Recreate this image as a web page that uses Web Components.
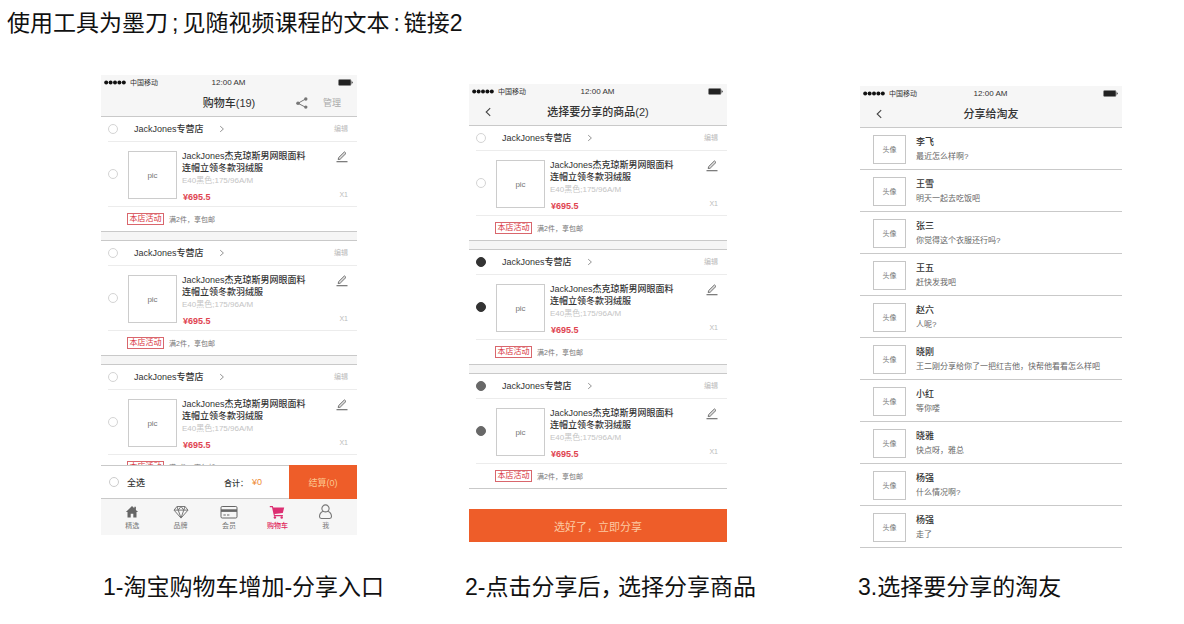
<!DOCTYPE html>
<html lang="zh-CN">
<head>
<meta charset="utf-8">
<title>购物车分享</title>
<style>
body { margin: 0; background: #fff; color: #111; font-family: "Liberation Sans", "Noto Sans CJK SC", sans-serif; }
</style>
</head>
<body>
<share-board></share-board>

<template id="t-share-board">
<style>
:host { display: block; }
h1, h2 { margin: 0; font-size: 23px; font-weight: 400; white-space: nowrap; }
h1 { line-height: 46px; padding-left: 7px; }
.half { padding: 0 4px; }
.comma { font-feature-settings: "halt"; padding-right: 6px; }
.stage { display: grid; grid-template-columns: 256fr 112fr 258fr 133fr 262fr; align-items: start; padding: 29px 62px 0 101px; }
.stage > :nth-child(1) { grid-column: 1; }
.stage > :nth-child(2) { grid-column: 3; margin-top: 9px; }
.stage > :nth-child(3) { grid-column: 5; margin-top: 11px; }
.captions { display: grid; grid-template-columns: 362fr 393fr 326fr; padding: 22px 0 0 103px; }
h2 { line-height: 34px; }
</style>
<h1>使用工具为墨刀<span class="half">;</span>见随视频课程的文本<span class="half">:</span>链接2</h1>
<div class="stage">
  <cart-screen></cart-screen>
  <pick-screen></pick-screen>
  <friend-screen></friend-screen>
</div>
<div class="captions">
  <h2>1-淘宝购物车增加-分享入口</h2>
  <h2>2-点击分享后<span class="comma">，</span>选择分享商品</h2>
  <h2>3.选择要分享的淘友</h2>
</div>
</template>

<template id="t-phone-header">
<style>
:host { display: block; background: #f6f6f6; border-bottom: 1px solid #c9c9c9; color: #333; }
.status, .bar { display: grid; grid-template-columns: 1fr auto 1fr; align-items: center; }
.status { height: 15px; padding: 0 4px 0 3px; font-size: 8px; line-height: 15px; }
.carrier { display: flex; align-items: center; gap: 4px; font-size: 7px; }
.battery { justify-self: end; }
svg { display: block; }
.bar { height: 26px; font-size: 11px; line-height: 26px; padding: 0 16px; }
.title { font-size: 11px; font-weight: 500; margin: 0; white-space: nowrap; }
.actions { display: flex; justify-content: flex-end; }
</style>
<div class="status">
  <span class="carrier"><svg width="22" height="5" viewBox="0 0 22 5" fill="#111"><circle cx="2.2" cy="2.5" r="2"/><circle cx="6.6" cy="2.5" r="2"/><circle cx="11" cy="2.5" r="2"/><circle cx="15.4" cy="2.5" r="2"/><circle cx="19.8" cy="2.5" r="2"/></svg>中国移动</span>
  <span>12:00 AM</span>
  <svg class="battery" width="15" height="7" viewBox="0 0 15 7"><rect x=".5" y=".5" width="12.5" height="6" rx="1.2" fill="#222" stroke="#888" stroke-width=".8"/><path d="M13.6 2.2q1.2.2 1.2 1.3t-1.2 1.3z" fill="#333"/></svg>
</div>
<div class="bar">
  <div><slot name="left"></slot></div>
  <h3 class="title"><slot></slot></h3>
  <div class="actions"><slot name="right"></slot></div>
</div>
</template>

<template id="t-back-button">
<style>
:host { display: block; }
button { display: block; border: 0; padding: 0; background: none; }
svg { display: block; }
</style>
<button type="button" aria-label="返回"><svg width="8" height="10" viewBox="0 0 8 10" fill="none" stroke="#444" stroke-width="1.1"><path d="M5.2 1.2 1.2 5l4 3.8"/></svg></button>
</template>

<template id="t-shop-card">
<style>
:host { display: block; background: #fff; border-bottom: 1px solid #c9c9c9; border-top: 1px solid #c9c9c9; color: #333; font-size: 9px; }
:host(:first-of-type) { border-top: 0; }
input { appearance: none; box-sizing: border-box; width: 10px; height: 10px; margin: 0; border: 1px solid #d4d4d4; border-radius: 50%; background: #fff; }
:host([picked]) input { border-color: var(--pick, #333); background: var(--pick, #333); }
.shop, .item, .promo { display: grid; align-items: center; }
.shop { grid-template-columns: 26px auto 1fr auto; height: 24px; padding: 0 9px 0 7px; line-height: 24px; }
.shop label { font-weight: 500; }
.rule { height: 1px; background: #ececec; margin-left: 7px; }
.shop a { margin-left: 15px; display: block; }
svg { display: block; }
button { border: 0; padding: 0; background: none; font: inherit; display: block; }
button.edit { font-size: 7px; color: #bbb; }
.item { grid-template-columns: 20px 49px 1fr auto; height: 53px; padding: 8px 9px 3px 7px; align-items: stretch; }
.item input { margin-top: 19px; }
.pic { box-sizing: border-box; height: 48px; margin-top: 1px; border: 1px solid #ccc; display: grid; place-items: center; font-size: 8px; color: #777; }
.info { padding-left: 5px; }
.name { display: block; line-height: 12px; white-space: nowrap; font-weight: 500; }
.attr { font-size: 8px; line-height: 14px; color: #c4c4c4; white-space: nowrap; }
.price { font-size: 9px; font-weight: 700; line-height: 14px; color: #e04450; padding: 2px 0 0 1px; }
.side { display: flex; flex-direction: column; align-items: flex-end; justify-content: space-between; padding: 1px 0 4px; }
.count { font-size: 7px; line-height: 10px; color: #bbb; }
.promo { grid-template-columns: auto 1fr; gap: 5px; height: 24px; padding-left: 26px; font-size: 7px; color: #777; }
.tag { box-sizing: border-box; width: 37px; height: 12px; border: 1px solid #d9666c; color: #d8323c; font-size: 8px; line-height: 10px; text-align: center; white-space: nowrap; }
</style>
<div class="shop">
  <input type="checkbox" id="shop">
  <label for="shop">JackJones专营店</label>
  <a href="#shop" aria-label="进店"><svg width="6" height="8" viewBox="0 0 6 8" fill="none" stroke="#888" stroke-width=".9"><path d="M1.2 1.2 4.4 4 1.2 6.8"/></svg></a>
  <button type="button" class="edit">编辑</button>
</div>
<div class="rule"></div>
<div class="item">
  <input type="checkbox" id="item">
  <div class="pic">pic</div>
  <div class="info">
    <label class="name" for="item">JackJones杰克琼斯男网眼面料<br>连帽立领冬款羽绒服</label>
    <div class="attr">E40黑色;175/96A/M</div>
    <div class="price">¥695.5</div>
  </div>
  <div class="side">
    <button type="button" aria-label="修改规格"><svg width="12" height="12" viewBox="0 0 12 12" fill="none" stroke="#666"><path d="M.5 10.7h11" stroke-width="1.1"/><path d="M2.2 8.6 2.6 6.6 8.4 .9 10 2.4 4.2 8.2z" stroke-width=".9" fill="#ddd"/></svg></button>
    <span class="count">X1</span>
  </div>
</div>
<div class="rule"></div>
<div class="promo"><span class="tag">本店活动</span><span>满2件，享包邮</span></div>
</template>

<template id="t-cart-screen">
<style>
:host { display: block; background: #fff; }
svg { display: block; }
button { border: 0; padding: 0; background: none; font: inherit; color: inherit; }
.tools { display: flex; align-items: center; gap: 15px; font-size: 9px; color: #aaa; }
.list { display: grid; gap: 8px; background: #f5f5f5; max-height: 348px; overflow: hidden; }
.settle { display: grid; grid-template-columns: auto 1fr auto auto 68px; align-items: center; height: 32px; border-top: 1px solid #c9c9c9; border-bottom: 1px solid #c9c9c9; font-size: 9px; color: #333; padding-left: 8px; }
.settle label { font-weight: 500; }
.settle input { appearance: none; box-sizing: border-box; width: 10px; height: 10px; margin: 0 8px 0 0; border: 1px solid #ccc; border-radius: 50%; }
.sum { font-size: 8px; font-weight: 500; padding-right: 4px; }
.total { color: #ee8a36; padding-right: 27px; }
.pay { align-self: stretch; margin: -1px 0; background: #ee5d29; color: #fcc78f; }
nav { display: grid; grid-template-columns: repeat(5, 1fr); height: 36px; padding: 0 7px; background: #f6f6f6; }
nav a { display: flex; flex-direction: column; align-items: center; gap: 1px; padding-top: 5px; font-size: 7px; line-height: 10px; color: #777; text-decoration: none; }
nav svg { height: 16px; }
nav a.on { color: #e0265c; font-weight: 500; }
</style>
<phone-header>购物车(19)
  <div class="tools" slot="right">
    <button type="button" aria-label="分享"><svg width="12" height="12" viewBox="0 0 12 12" fill="none" stroke="#777" stroke-width="1"><path d="M9.5 2 2 6.3 9.5 10.2"/><g fill="#777" stroke="none"><circle cx="9.8" cy="2" r="1.7"/><circle cx="2" cy="6.2" r="1.8"/><circle cx="9.8" cy="10.1" r="1.7"/></g></svg></button>
    <button type="button">管理</button>
  </div>
</phone-header>
<div class="list"><shop-card></shop-card><shop-card></shop-card><shop-card></shop-card></div>
<div class="settle">
  <input type="checkbox" id="all"><label for="all">全选</label>
  <span class="sum">合计：</span><span class="total">¥0</span>
  <button type="button" class="pay">结算(0)</button>
</div>
<nav>
  <a href="#home"><svg width="14" viewBox="0 0 14 16" fill="#666"><path d="M7 2 .9 8.1h1.6v5.4h3.2V9.8h2.6v3.7h3.2V8.1h1.6L10.9 5.9V2.8H9.3v1.5z"/></svg>精选</a>
  <a href="#brand"><svg width="16" viewBox="0 0 16 16" fill="none" stroke="#777" stroke-width="1" stroke-linejoin="round"><path d="M4 2.5h8l3 3.6-7 8-7-8zM1 6.1h14M4 2.5l1.2 3.6L8 14l2.8-7.9L12 2.5M5.2 6.1 8 2.5l2.8 3.6"/></svg>品牌</a>
  <a href="#member"><svg width="18" viewBox="0 0 18 16" fill="none" stroke="#666"><rect x="1" y="2.5" width="16" height="11.5" rx="1.2"/><path d="M1 6.6h16" stroke-width="2.6"/><path d="M3.4 11h2.4M7 11h2.4"/></svg>会员</a>
  <a href="#cart" class="on"><svg width="16" viewBox="0 0 16 16" fill="#dc2f72"><path d="M.8 2h3l.5 1.5h10.9l-1.4 5.4-8.2 1 .3 1.1h8v1.2H5L3 3.3H.8z"/><circle cx="5.9" cy="13.5" r="1.2"/><circle cx="12.7" cy="13.5" r="1.2"/></svg>购物车</a>
  <a href="#me"><svg width="15" viewBox="0 0 15 16" fill="none" stroke="#777" stroke-width="1.1"><path d="M5.1 7.2a3.6 3.6 0 1 1 4.8 0c2.2 1 3.6 3.1 3.6 5.4q0 1.9-1.8 1.9H3.3q-1.8 0-1.8-1.9c0-2.3 1.4-4.4 3.6-5.4zM5.1 7.2q2.4 1.4 4.8 0"/></svg>我</a>
</nav>
</template>

<template id="t-pick-screen">
<style>
:host { display: block; background: #fff; }
.list { display: grid; gap: 8px; background: #f5f5f5; }
.soft { --pick: #686868; }
.send { display: block; width: 100%; height: 33px; margin: 20px 0 0; padding: 0; border: 0; background: #ee5d29; color: #fcc9a2; font: inherit; font-size: 11px; }
</style>
<phone-header><back-button slot="left"></back-button>选择要分享的商品(2)</phone-header>
<div class="list"><shop-card></shop-card><shop-card picked></shop-card><shop-card picked class="soft"></shop-card></div>
<button type="button" class="send">选好了，立即分享</button>
</template>

<template id="t-friend-screen">
<style>
:host { display: block; background: #fff; }
</style>
<phone-header><back-button slot="left"></back-button>分享给淘友</phone-header>
<friend-row name="李飞">最近怎么样啊?</friend-row>
<friend-row name="王雪">明天一起去吃饭吧</friend-row>
<friend-row name="张三">你觉得这个衣服还行吗?</friend-row>
<friend-row name="王五">赶快发我吧</friend-row>
<friend-row name="赵六">人呢?</friend-row>
<friend-row name="晓刚">王二刚分享给你了一把红吉他，快帮他看看怎么样吧</friend-row>
<friend-row name="小红">等你喽</friend-row>
<friend-row name="晓雅">快点呀，雅总</friend-row>
<friend-row name="杨强">什么情况啊?</friend-row>
<friend-row name="杨强">走了</friend-row>
</template>

<template id="t-friend-row">
<style>
:host { display: grid; grid-template-columns: 33px 1fr; gap: 10px; padding: 7px 0 5px 13px; border-bottom: 1px solid #c9c9c9; color: #333; }
.avatar { box-sizing: border-box; height: 29px; border: 1px solid #c6c6c6; display: grid; place-items: center; font-size: 7px; line-height: 10px; color: #777; }
.name { font-size: 9px; line-height: 15px; font-weight: 500; }
.text { font-size: 8px; line-height: 14px; color: #666; white-space: nowrap; }
</style>
<div class="avatar">头像</div>
<div><div class="name"></div><div class="text"><slot></slot></div></div>
</template>

<script>
class BaseElement extends HTMLElement {
  constructor() {
    super();
    const template = document.getElementById('t-' + this.localName);
    this.attachShadow({ mode: 'open' }).append(template.content.cloneNode(true));
  }
}
class ShopCard extends BaseElement {
  connectedCallback() {
    const picked = this.hasAttribute('picked');
    this.shadowRoot.querySelectorAll('input').forEach(box => { box.checked = picked; });
  }
}
class FriendRow extends BaseElement {
  connectedCallback() {
    this.shadowRoot.querySelector('.name').textContent = this.getAttribute('name');
  }
}
customElements.define('back-button', class extends BaseElement {});
customElements.define('phone-header', class extends BaseElement {});
customElements.define('shop-card', ShopCard);
customElements.define('friend-row', FriendRow);
customElements.define('cart-screen', class extends BaseElement {});
customElements.define('pick-screen', class extends BaseElement {});
customElements.define('friend-screen', class extends BaseElement {});
customElements.define('share-board', class extends BaseElement {});
</script>
</body>
</html>
